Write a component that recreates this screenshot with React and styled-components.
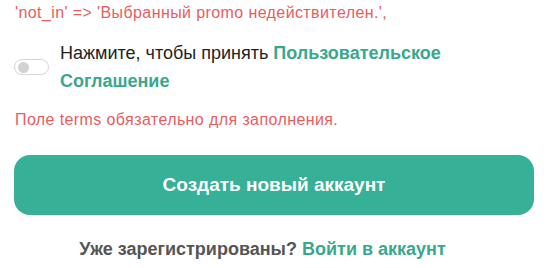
import React, { useState } from 'react';
import styled, { createGlobalStyle } from 'styled-components';

const GlobalStyle = createGlobalStyle`
  body {
    margin: 0;
    background: #fff;
    font-family: "Liberation Sans", Arial, sans-serif;
  }
`;

const Form = styled.div`
  width: 520px;
  padding: 3px 0 0 14px;
  display: flex;
  flex-direction: column;
`;

const Error = styled.div`
  color: #ec5b5e;
  font-size: 16px;
  line-height: 20px;
  letter-spacing: 0.4px;
  margin-top: ${(p) => p.$top || 0}px;
  padding-left: 1px;
`;

const TermsRow = styled.label`
  display: flex;
  align-items: center;
  gap: 11px;
  margin-top: 16px;
  cursor: pointer;
`;

const Toggle = styled.span`
  flex: none;
  width: 27px;
  height: 14px;
  border: 1px solid #d6d6d6;
  border-radius: 9px;
  background: #fff;
  display: flex;
  align-items: center;
  padding: 0 3px;
  justify-content: ${(p) => (p.$on ? 'flex-end' : 'flex-start')};

  &::before {
    content: '';
    width: 11px;
    height: 11px;
    border-radius: 50%;
    background: ${(p) => (p.$on ? '#36b097' : '#d2d2d2')};
  }
`;

const TermsText = styled.span`
  font-size: 18px;
  line-height: 28px;
  color: #232323;
`;

const Link = styled.a`
  color: #37a88d;
  font-weight: bold;
  text-decoration: none;
`;

const Button = styled.button`
  margin-top: 25px;
  height: 60px;
  width: 520px;
  border: none;
  border-radius: 16px;
  background: #36b097;
  color: #fff;
  font-family: inherit;
  font-size: 19px;
  font-weight: bold;
  cursor: pointer;
`;

const Footer = styled.div`
  margin-top: 23px;
  text-align: center;
  font-size: 18px;
  line-height: 22px;
  font-weight: bold;
  color: #555;
  padding-right: 23px;
`;

export default function App() {
  const [on, setOn] = useState(false);
  return (
    <>
      <GlobalStyle />
      <Form>
        <Error>'not_in' =&gt; 'Выбранный promo недействителен.',</Error>
        <TermsRow onClick={() => setOn(!on)}>
          <Toggle $on={on} />
          <TermsText>
            Нажмите, чтобы принять <Link href="#">Пользовательское Соглашение</Link>
          </TermsText>
        </TermsRow>
        <Error $top={15}>Поле terms обязательно для заполнения.</Error>
        <Button>Создать новый аккаунт</Button>
        <Footer>
          Уже зарегистрированы? <Link href="#">Войти в аккаунт</Link>
        </Footer>
      </Form>
    </>
  );
}
